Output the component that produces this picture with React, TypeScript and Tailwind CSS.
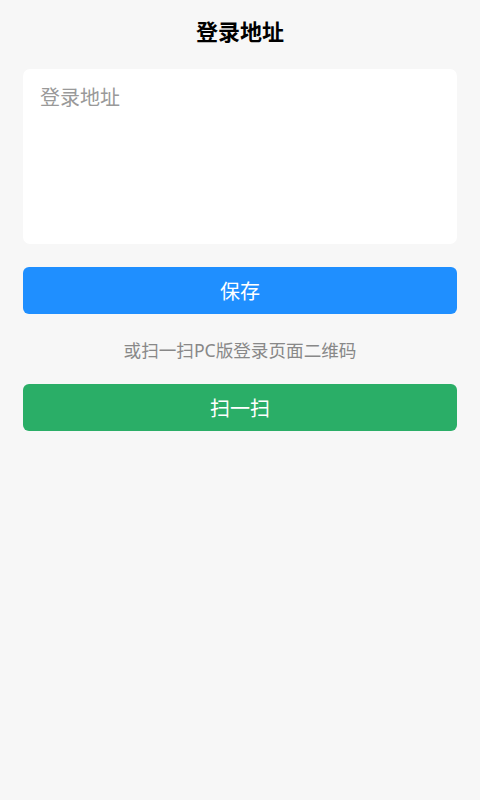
const font = '"Noto Sans", "Noto Sans CJK SC", sans-serif';

export default function App() {
  return (
    <div
      className="min-h-[800px] w-full bg-[#f7f7f7]"
      style={{ fontFamily: font }}
    >
      {/* Header */}
      <header className="flex h-[62px] items-center justify-center">
        <h1 className="text-[22px] font-bold leading-none text-black">登录地址</h1>
      </header>

      <main className="px-[23px] pt-[7px]">
        <textarea
          className="block h-[175px] w-full resize-none rounded-[7px] bg-white px-[17px] py-[14px] text-[20px] leading-[30px] text-[#333] placeholder-[#999] outline-none"
          placeholder="登录地址"
        />

        <button className="mt-[23px] flex h-[47px] w-full items-center justify-center rounded-[6px] bg-[#1f8fff] pt-[3px] text-[20px] text-white">
          保存
        </button>

        <p className="mt-[24px] text-center text-[17.6px] leading-[24px] text-[#888]">
          或扫一扫PC版登录页面二维码
        </p>

        <button className="mt-[22px] flex h-[47px] w-full items-center justify-center rounded-[6px] bg-[#2aae67] pt-[3px] text-[20px] text-white">
          扫一扫
        </button>
      </main>
    </div>
  );
}
